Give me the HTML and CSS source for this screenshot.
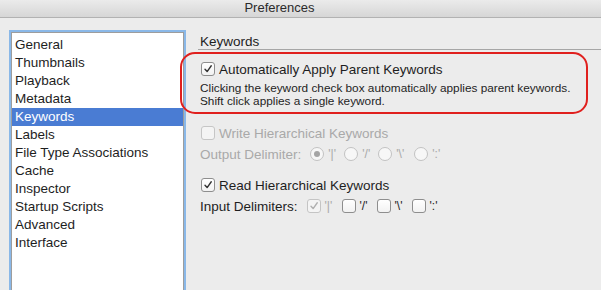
FILE: index.html
```html
<!DOCTYPE html>
<html lang="en">
<head>
    <meta charset="UTF-8">
    <title>Preferences</title>
    <link rel="stylesheet" href="styles.css">
</head>
<body>
    <div class="window">
        <div class="titlebar">Preferences</div>

        <div class="content">
            <div class="sidebar">
                <ul class="pref-list">
                    <li>General</li>
                    <li>Thumbnails</li>
                    <li>Playback</li>
                    <li>Metadata</li>
                    <li class="selected">Keywords</li>
                    <li>Labels</li>
                    <li>File Type Associations</li>
                    <li>Cache</li>
                    <li>Inspector</li>
                    <li>Startup Scripts</li>
                    <li>Advanced</li>
                    <li>Interface</li>
                </ul>
            </div>

            <div class="panel">
                <div class="section-title">Keywords</div>

                <div class="callout">
                    <label class="check-row">
                        <span class="checkbox checked">
                            <svg viewBox="0 0 14 14"><path d="M3.5 7.2 L6 10 L10.8 3.2" /></svg>
                        </span>
                        Automatically Apply Parent Keywords
                    </label>
                    <p class="hint">
                        Clicking the keyword check box automatically applies parent keywords.<br>
                        Shift click applies a single keyword.
                    </p>
                </div>

                <div class="group disabled">
                    <label class="check-row">
                        <span class="checkbox"></span>
                        Write Hierarchical Keywords
                    </label>
                    <div class="option-row">
                        <span class="option-label">Output Delimiter:</span>
                        <span class="radio selected"></span><span class="opt">'|'</span>
                        <span class="radio"></span><span class="opt">'/'</span>
                        <span class="radio"></span><span class="opt last">'\'</span>
                        <span class="radio"></span><span class="opt">':'</span>
                    </div>
                </div>

                <div class="group">
                    <label class="check-row">
                        <span class="checkbox checked">
                            <svg viewBox="0 0 14 14"><path d="M3.5 7.2 L6 10 L10.8 3.2" /></svg>
                        </span>
                        Read Hierarchical Keywords
                    </label>
                    <div class="option-row">
                        <span class="option-label">Input Delimiters:</span>
                        <span class="checkbox checked dim">
                            <svg viewBox="0 0 14 14"><path d="M3.5 7.2 L6 10 L10.8 3.2" /></svg>
                        </span><span class="opt wide dim">'|'</span>
                        <span class="checkbox"></span><span class="opt wide">'/'</span>
                        <span class="checkbox"></span><span class="opt wide">'\'</span>
                        <span class="checkbox"></span><span class="opt wide">':'</span>
                    </div>
                </div>
            </div>
        </div>
    </div>
</body>
</html>
```

FILE: styles.css
```css
body {
    margin: 0;
    font-family: "Liberation Sans", Arial, sans-serif;
    font-size: 13.5px;
    color: #1e1e1e;
    background-color: #ececec;
    overflow: hidden;
}

.window {
    width: 601px;
    height: 290px;
    overflow: hidden;
}

.titlebar {
    height: 17px;
    line-height: 16px;
    text-align: center;
    font-size: 13px;
    color: #2b2b2b;
    background: linear-gradient(#ebebeb, #d6d6d6);
    border-bottom: 1px solid #b2b2b2;
    padding-right: 42px;
}

.content {
    display: flex;
    padding: 12px 0 0 9px;
}

.sidebar {
    width: 171px;
    height: 280px;
    flex-shrink: 0;
    background-color: white;
    border: 1px solid #9d9d9d;
    box-shadow: 0 0 0 2px #8ab8e8;
    margin: 2px 0 0 2px;
}

.pref-list {
    list-style: none;
    margin: 0;
    padding: 3px 0 0 0;
}

.pref-list li {
    height: 18px;
    line-height: 18px;
    padding-left: 3px;
    white-space: nowrap;
}

.pref-list li.selected {
    background-color: #4a7cd3;
    color: white;
}

.panel {
    flex: 1;
    padding-top: 5px;
}

.section-title {
    margin-left: 14px;
    padding-left: 2px;
    line-height: 14px;
    border-bottom: 1px solid #a6a6a6;
}

.callout {
    margin: 2px 0 0 -4px;
    width: 408px;
    height: 62px;
    border: 2px solid #e0201e;
    border-radius: 15px;
    padding: 7px 0 0 19px;
    box-sizing: border-box;
}

.check-row {
    display: flex;
    align-items: center;
    gap: 4px;
    height: 16px;
}

.checkbox {
    width: 12px;
    height: 12px;
    border: 1px solid #8e8e8e;
    border-radius: 3px;
    background: linear-gradient(#ffffff, #f2f2f2);
    display: inline-flex;
    flex-shrink: 0;
}

.checkbox svg {
    width: 12px;
    height: 12px;
    fill: none;
    stroke: #333;
    stroke-width: 1.6;
    stroke-linecap: round;
    stroke-linejoin: round;
}

.hint {
    margin: 5px 0 0 -1px;
    font-size: 11.8px;
    line-height: 13px;
}

.group {
    margin: 11px 0 0 17px;
}

.group + .group {
    margin-top: 15px;
}

.disabled {
    color: #a9a9a9;
}

.disabled .checkbox {
    border-color: #c6c6c6;
    background: #f4f4f4;
}

.option-row {
    display: flex;
    align-items: center;
    height: 16px;
    margin: 5px 0 0 -1px;
}

.option-label {
    margin-right: 9px;
}

.radio {
    width: 12px;
    height: 12px;
    border: 1px solid #c2c2c2;
    border-radius: 50%;
    background: #f7f7f7;
    display: inline-flex;
    align-items: center;
    justify-content: center;
    margin-right: 4px;
    flex-shrink: 0;
}

.radio.selected::after {
    content: "";
    width: 6px;
    height: 6px;
    border-radius: 50%;
    background: #a5a5a5;
}

.opt {
    width: 16px;
    font-size: 12px;
}

.opt.last {
    width: 18px;
}

.opt.wide {
    width: 17px;
}

.option-row .checkbox {
    margin-right: 4px;
}

.checkbox.dim {
    border-color: #c4c4c4;
    background: #f4f4f4;
}

.checkbox.dim svg {
    stroke: #b0b0b0;
}

.opt.dim {
    color: #a9a9a9;
}
```
